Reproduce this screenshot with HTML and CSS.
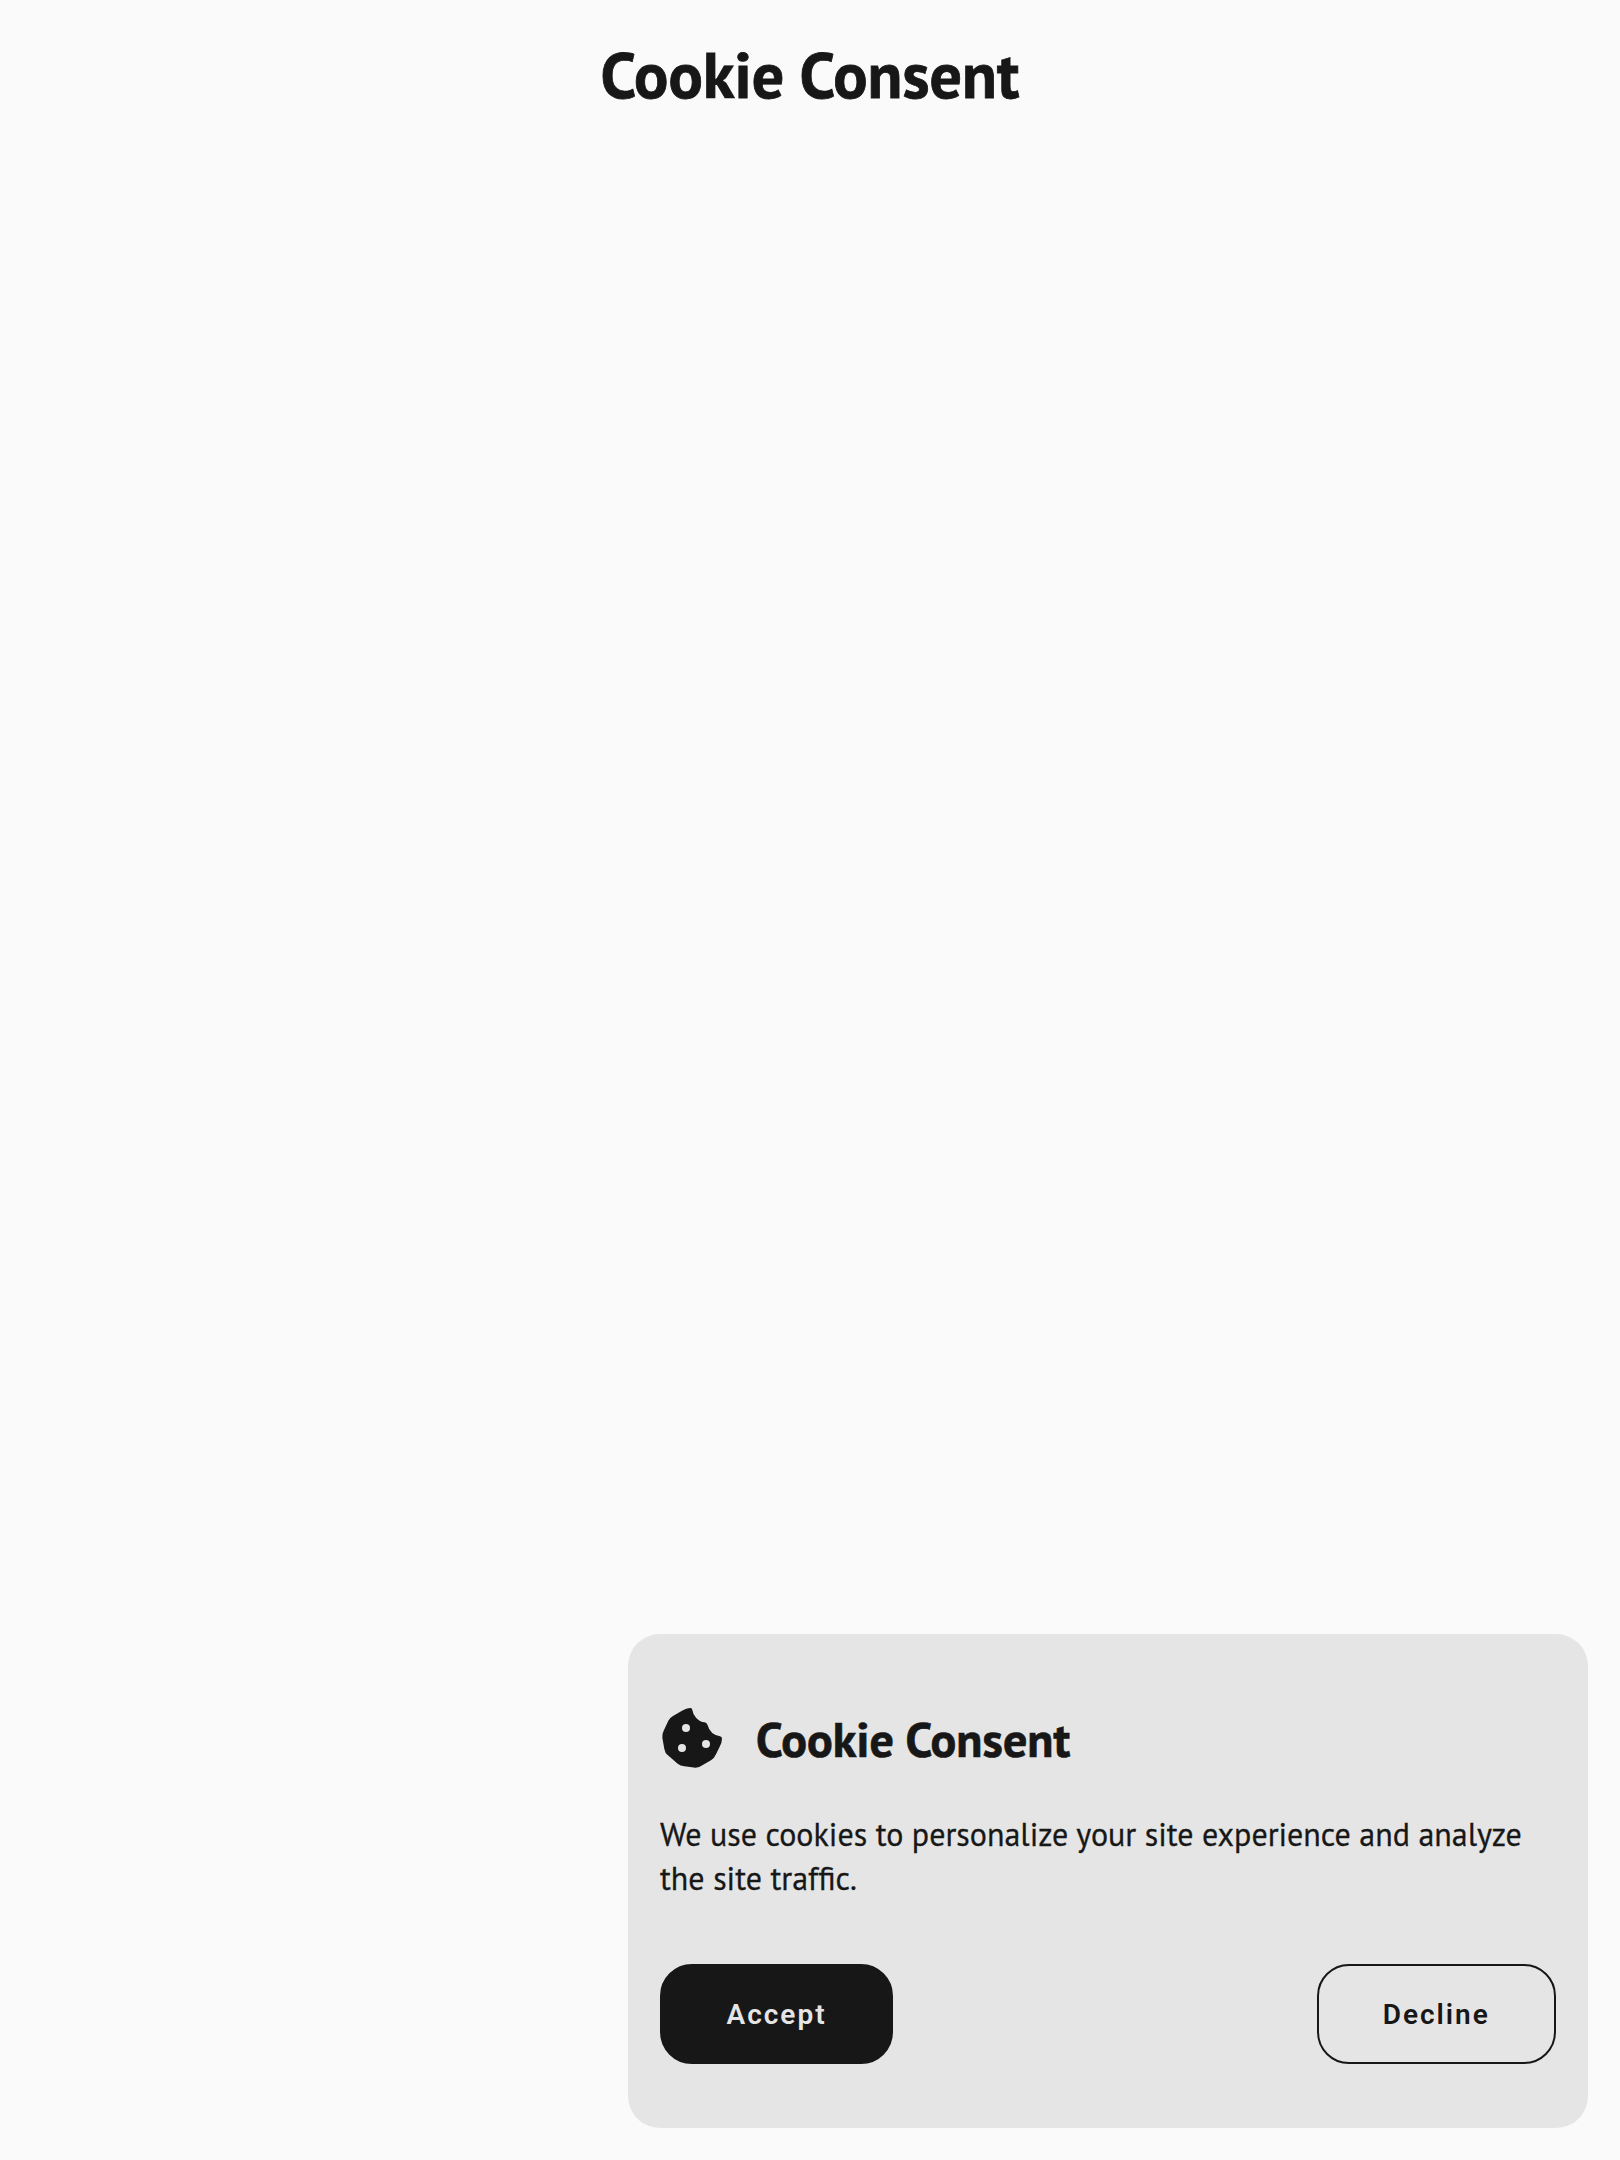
FILE: index.html
```html
<!DOCTYPE html>
<html lang="en">
<head>
<meta charset="UTF-8">
<title>Cookie Consent</title>
<link rel="stylesheet" href="styles.css">
</head>
<body>
<h1 class="page-title">Cookie Consent</h1>
<section class="consent">
  <header class="consent-header">
    <svg class="cookie" viewBox="30 33 192 192" aria-hidden="true">
      <path fill="currentColor" fill-rule="evenodd" d="M120 39Q126 38 127 45Q129 59 138 68Q149 80 164 82Q171 83 173 91Q180 119 210 124Q216 125 216 131Q215 145 210 153L198 178Q193 190 183 196L157 211Q148 218 137 218L103 214Q91 213 83 206L53 180Q45 174 43 162L37 128Q36 117 41 107L55 77Q60 68 69 63L96 47Q109 39 120 39ZM108 87a12 12 0 1 0 0 24a12 12 0 0 0 0-24ZM96 147a12 12 0 1 0 0 24a12 12 0 0 0 0-24ZM168 135a12 12 0 1 0 0 24a12 12 0 0 0 0-24Z"/>
    </svg>
    <h2 class="consent-title">Cookie Consent</h2>
  </header>
  <p class="consent-text">We use cookies to personalize your site experience and analyze<br>the site traffic.</p>
  <div class="actions">
    <button class="button button-accept">Accept</button>
    <button class="button button-decline">Decline</button>
  </div>
</section>
</body>
</html>
```
FILE: styles.css
```css
* { box-sizing: border-box; }
body {
  margin: 0;
  height: 2160px;
  padding: 32px;
  display: flex;
  flex-direction: column;
  justify-content: space-between;
  background: #fafafa;
  color: #171717;
  font-family: "PT Sans", "Open Sans", sans-serif;
}
.page-title {
  margin: 0;
  text-align: center;
  font-size: 64px;
  line-height: 85px;
  letter-spacing: 0.05px;
  -webkit-text-stroke: 0.8px #171717;
}
.consent {
  align-self: flex-end;
  width: 960px;
  height: 494px;
  padding: 64px 32px;
  border-radius: 32px;
  background: #e5e5e5;
}
.consent-header {
  display: flex;
  align-items: flex-start;
  gap: 32px;
  height: 82px;
  padding-top: 8px;
}
.cookie { width: 64px; height: 64px; }
.consent-title {
  margin: 0;
  font-size: 48px;
  line-height: 66px;
  letter-spacing: 0.05px;
  -webkit-text-stroke: 0.7px #171717;
}
.consent-text {
  margin: 32px 0 0;
  font-size: 32px;
  line-height: 44px;
  white-space: nowrap;
  -webkit-text-stroke: 0.3px #171717;
}
.actions {
  display: flex;
  justify-content: space-between;
  margin-top: 64px;
}
.button {
  height: 100px;
  padding: 2px 0 0;
  border: 2px solid #171717;
  border-radius: 32px;
  font: 600 28px/40px Roboto, sans-serif;
  letter-spacing: 2px;
}
.button-accept { width: 233px; background: #171717; color: #e5e5e5; }
.button-decline { width: 239.5px; background: transparent; color: #171717; }
```
